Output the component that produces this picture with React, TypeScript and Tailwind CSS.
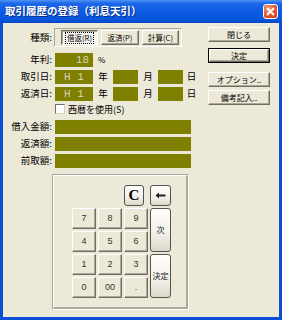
import React from 'react'

const jp = "font-['Noto_Sans_CJK_JP','Noto_Sans_CJK_SC',sans-serif]"
const raised =
  'border border-t-white border-l-white border-b-[#716f64] border-r-[#716f64] shadow-[inset_-1px_-1px_#aca899]'
const sunken =
  'border border-t-[#716f64] border-l-[#716f64] border-b-white border-r-white shadow-[inset_1px_1px_#aca899]'
const xpKey =
  'rounded-[3px] border border-[#55554f] bg-[linear-gradient(to_bottom,#ffffff,#f1efe8_60%,#dcd8cc)] flex items-center justify-center'

function Label({ text }: { text: string }) {
  return <div className="w-[49px] text-right text-[9.5px] leading-none text-black whitespace-nowrap">{text}</div>
}

function Lcd({ className, text, right }: { className: string; text?: string; right?: boolean }) {
  return (
    <div
      className={`${className} h-[14px] bg-[#808000] flex items-center ${right ? 'justify-end pr-[4px]' : 'justify-center'} font-['Liberation_Mono',monospace] text-[11px] leading-none text-[#d4d4bc] whitespace-pre`}
    >
      {text}
    </div>
  )
}

function SideButton({ text, isDefault, className }: { text: string; isDefault?: boolean; className: string }) {
  const inner = (
    <div className={`h-full ${raised} flex items-center justify-center text-[8px] leading-none whitespace-nowrap`}>{text}</div>
  )
  return (
    <div className={`${className} w-[62px] h-[15px] ${isDefault ? 'border border-black' : ''}`}>{inner}</div>
  )
}

export default function App() {
  const keys: { t: string; tall?: boolean }[] = [
    { t: '7' }, { t: '8' }, { t: '9' }, { t: '次', tall: true },
    { t: '4' }, { t: '5' }, { t: '6' },
    { t: '1' }, { t: '2' }, { t: '3' }, { t: '決定', tall: true },
    { t: '0' }, { t: '00' }, { t: '.' },
  ]

  return (
    <div className={`w-[282px] h-[320px] flex flex-col bg-[#0a4fd6] ${jp} text-black`}>
      {/* title bar */}
      <div className="h-[23px] flex items-center pl-[5px] pr-[4px] bg-[linear-gradient(to_bottom,#4d94f7_0%,#1d66e8_15%,#0a5ae2_55%,#0856dc_85%,#0646c4_100%)]">
        <span className="text-white font-bold text-[10.5px] leading-none whitespace-nowrap [text-shadow:1px_1px_#0a2c8a]">
          取引履歴の登録（利息天引）
        </span>
        <div className="ml-auto w-[15px] h-[15px] rounded-[3px] border border-white bg-[radial-gradient(circle_at_35%_30%,#f0a080,#e0582e_55%,#c03a14)] flex items-center justify-center">
          <svg width="9" height="9" viewBox="0 0 9 9">
            <path d="M1.5 1.5 L7.5 7.5 M7.5 1.5 L1.5 7.5" stroke="white" strokeWidth="1.8" strokeLinecap="round" />
          </svg>
        </div>
      </div>

      {/* body */}
      <div className="flex-1 mx-[3px] mb-[3px] bg-[#ece9d8] flex">
        {/* left column */}
        <div className="w-[200px] flex flex-col">
          <div className="mt-[5px] h-[19px] flex items-center">
            <Label text="種類:" />
            <div className="ml-[2px] w-[128px] h-[19px] border border-t-[#aca899] border-l-[#aca899] border-b-white border-r-white flex items-center gap-[3px] pl-[6px]">
              <div className={`shrink-0 w-[37px] h-[15px] ${sunken} bg-[#f6f5f0] flex items-center justify-center`}>
                <span className="shrink-0 whitespace-nowrap border border-dotted border-black px-[1px] text-[7.5px] leading-[10px]">借返(R)</span>
              </div>
              <div className={`shrink-0 w-[38px] h-[15px] ${raised} flex items-center justify-center text-[7.5px] leading-none whitespace-nowrap`}>返済(P)</div>
              <div className={`shrink-0 w-[37px] h-[15px] ${raised} flex items-center justify-center text-[7.5px] leading-none whitespace-nowrap`}>計算(C)</div>
            </div>
          </div>

          <div className="mt-[6px] h-[14px] flex items-center">
            <Label text="年利:" />
            <Lcd className="ml-[3px] w-[38px]" text="18" right />
            <span className="ml-[5px] text-[8px] leading-none">%</span>
          </div>

          {['取引日:', '返済日:'].map((l) => (
            <div key={l} className="mt-[3px] h-[14px] flex items-center">
              <Label text={l} />
              <Lcd className="ml-[3px] w-[38px]" text="H 1" />
              <span className="w-[20px] text-center text-[9.5px] leading-none">年</span>
              <Lcd className="w-[25px]" />
              <span className="w-[20px] text-center text-[9.5px] leading-none">月</span>
              <Lcd className="w-[25px]" />
              <span className="w-[17px] text-center text-[9.5px] leading-none">日</span>
            </div>
          ))}

          <div className="mt-[2px] h-[12px] flex items-center pl-[52px]">
            <div className="w-[10px] h-[10px] bg-white border border-t-[#716f64] border-l-[#716f64] border-b-[#d4d0c8] border-r-[#d4d0c8]" />
            <span className="ml-[3px] text-[9px] leading-none whitespace-nowrap">西暦を使用(S)</span>
          </div>

          {['借入金額:', '返済額:', '前取額:'].map((l, i) => (
            <div key={l} className={`${i === 0 ? 'mt-[5px]' : 'mt-[3px]'} h-[14px] flex items-center`}>
              <Label text={l} />
              <Lcd className="ml-[3px] w-[136px]" />
            </div>
          ))}

          {/* keypad */}
          <div className="mt-[6px] ml-[49px] w-[137px] h-[136px] border border-t-[#aca899] border-l-[#aca899] border-b-white border-r-white">
            <div className="h-full border border-t-white border-l-white border-b-2 border-r-2 border-b-[#aca899] border-r-[#aca899] flex flex-col items-end pt-[9px] pr-[15px]">
              <div className="flex gap-[6px]">
                <div className={`w-[20px] h-[21px] ${xpKey} font-['Liberation_Serif',serif] font-bold text-[15px] leading-none`}>C</div>
                <div className={`w-[21px] h-[21px] ${xpKey}`}>
                  <svg width="11" height="7" viewBox="0 0 11 7">
                    <path d="M0.5 3.5 L4 0.5 L4 2.6 L10.5 2.6 L10.5 4.4 L4 4.4 L4 6.5 Z" fill="#222" />
                  </svg>
                </div>
              </div>
              <div className="mt-[2px] grid grid-cols-[24px_24px_24px_21px] grid-rows-[21px_21px_21px_21px] gap-[2px]">
                {keys.map((k) =>
                  k.tall ? (
                    <div key={k.t} className={`row-span-2 ${xpKey} text-[8px] leading-none text-[#222]`}>
                      {k.t}
                    </div>
                  ) : (
                    <div
                      key={k.t}
                      className={`${raised} bg-[#ece9d8] flex items-center justify-center font-['Liberation_Sans',sans-serif] text-[9px] leading-none text-[#333]`}
                    >
                      {k.t}
                    </div>
                  ),
                )}
              </div>
            </div>
          </div>
        </div>

        {/* right column */}
        <div className="ml-[5px] flex flex-col">
          <SideButton className="mt-[4px]" text="閉じる" />
          <SideButton className="mt-[6px]" text="決定" isDefault />
          <SideButton className="mt-[9px]" text="オプション.." />
          <SideButton className="mt-[3px]" text="備考記入.." />
        </div>
      </div>
    </div>
  )
}
